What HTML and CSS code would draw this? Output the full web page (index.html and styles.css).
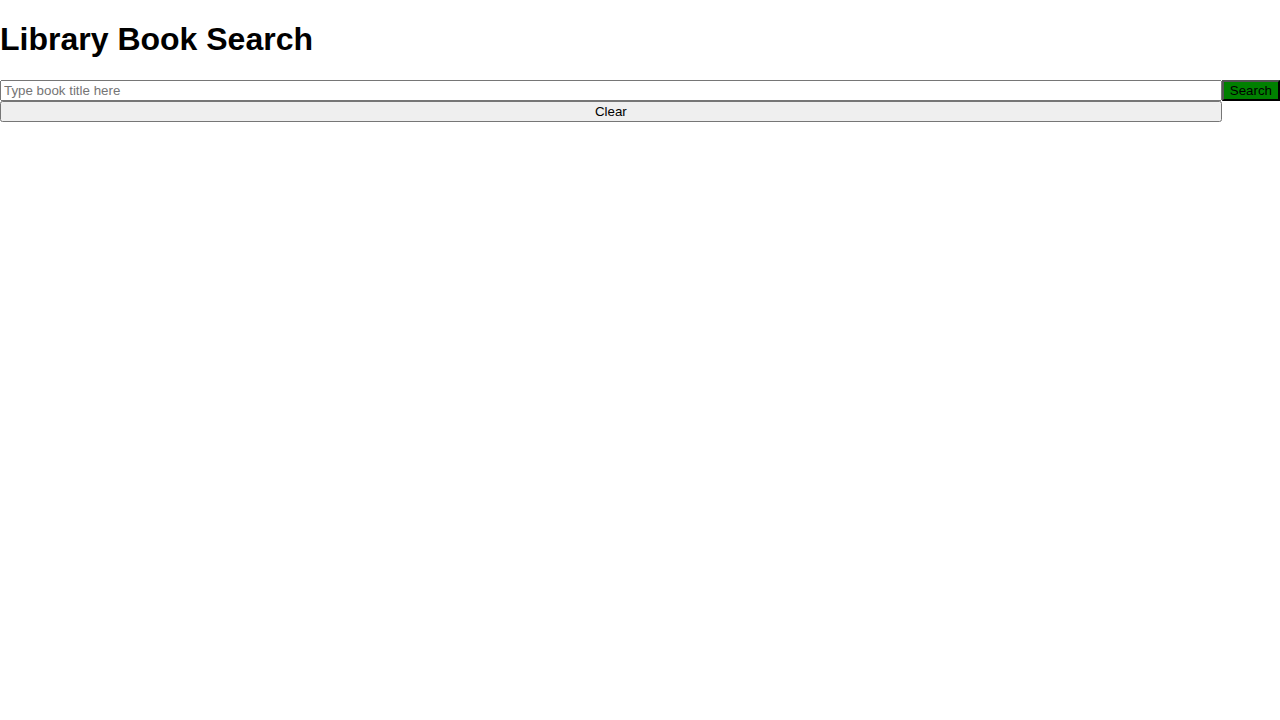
FILE: index.html
```html
<!DOCTYPE html>
<html>
<head>
<meta charset="utf-8">
<link rel="stylesheet" href="styles.css">
</head>
<body>
<h1 class="title">Library Book Search</h1>
<div class="search-form">
  <input class="search-input" type="text" placeholder="Type book title here">
  <button class="search-btn">Search</button>
  <button class="clear-btn">Clear</button>
</div>
</body>
</html>
```
FILE: styles.css
```css
body {
  margin: 0;
  font-family: "Liberation Sans", Arial, sans-serif;
}
.title {
  font-size: 32px;
  margin: 21.44px 0;
}
.search-form {
  display: grid;
  grid-template-columns: 1fr auto;
}
.search-input, .search-btn, .clear-btn {
  font-family: "Liberation Sans", Arial, sans-serif;
  font-size: 13.333px;
  margin: 0;
}
.search-btn {
  background-color: green;
  color: black;
}
.clear-btn {
  grid-column: 1;
}
```
